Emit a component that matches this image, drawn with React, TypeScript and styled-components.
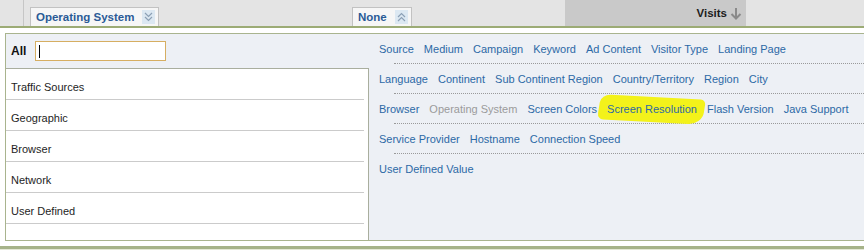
import React from 'react';
import styled, { createGlobalStyle } from 'styled-components';

const GlobalStyle = createGlobalStyle`
  html, body {
    margin: 0;
    padding: 0;
    background: #ffffff;
  }
  body {
    font-family: "Liberation Sans", Arial, sans-serif;
    font-size: 11px;
    overflow: hidden;
  }
`;

const Page = styled.div`
  width: 864px;
  height: 250px;
  display: flex;
  flex-direction: column;
  overflow: hidden;
`;

const Header = styled.div`
  display: flex;
  height: 26px;
  flex-shrink: 0;
  background: #e4e4e4;
  border-bottom: 2px solid #9cab75;
`;

const HeaderCell = styled.div<{ $width?: number; $shade?: boolean; $padLeft?: number; $end?: boolean; $divider?: boolean }>`
  display: flex;
  align-items: flex-end;
  justify-content: ${(p) => (p.$end ? 'flex-end' : 'flex-start')};
  box-sizing: border-box;
  width: ${(p) => (p.$width ? `${p.$width}px` : 'auto')};
  flex: ${(p) => (p.$width ? '0 0 auto' : '1')};
  padding-left: ${(p) => p.$padLeft ?? 0}px;
  background: ${(p) => (p.$shade ? '#c9c9c9' : 'transparent')};
  border-right: ${(p) => (p.$divider ? '1px solid #c6c6c6' : 'none')};
`;

const Tab = styled.div`
  display: flex;
  align-items: center;
  gap: 8px;
  height: 18px;
  padding: 0 3px 0 5px;
  background: #f6f6f6;
  border: 1px solid #c2c2c2;
  border-bottom: none;
  color: #2b5b96;
  font-weight: bold;
  font-size: 11.5px;
`;

const IconBox = styled.span`
  display: flex;
  align-items: center;
  justify-content: center;
  width: 13px;
  height: 14px;
  background: #dce8f2;
`;

const SortLabel = styled.div`
  display: flex;
  align-items: center;
  gap: 3px;
  height: 26px;
  padding-right: 4px;
  color: #1c1c1c;
  font-weight: bold;
  font-size: 11.5px;
`;

const Panel = styled.div`
  display: flex;
  height: 206px;
  margin: 5px 0 0 5px;
  border: 1px solid #a9b48e;
  border-right: none;
  background: #edf0f5;
  flex-shrink: 0;
`;

const LeftCol = styled.div`
  display: flex;
  flex-direction: column;
  width: 363px;
  flex-shrink: 0;
`;

const AllRow = styled.div`
  display: flex;
  align-items: center;
  gap: 9px;
  height: 34px;
  padding-left: 5px;
  font-weight: bold;
  font-size: 12px;
  color: #111;
`;

const SearchBox = styled.div`
  display: flex;
  align-items: center;
  box-sizing: border-box;
  width: 131px;
  height: 20px;
  background: #fff;
  border: 1px solid #d6ae62;
  padding-left: 3px;
`;

const Caret = styled.span`
  width: 1px;
  height: 13px;
  background: #000;
`;

const CategoryList = styled.div`
  flex: 1;
  background: #fff;
  border-top: 1px solid #a9ae9e;
  border-right: 1px solid #a9ae9e;
`;

const CategoryItem = styled.div`
  padding: 12px 0 5px 5px;
  margin-right: 4px;
  line-height: 13px;
  color: #1e1e1e;
  border-bottom: 1px solid #cbcbcb;
`;

const RightCol = styled.div`
  flex: 1;
  display: flex;
  flex-direction: column;
`;

const LinkLine = styled.div`
  display: flex;
  align-items: center;
  gap: 10px;
  height: 29px;
  padding-left: 10px;
  white-space: nowrap;
`;

const Divider = styled.div`
  margin-left: 25px;
  border-top: 1px dotted #9a9a9a;
`;

const DimLink = styled.span<{ $disabled?: boolean }>`
  color: ${(p) => (p.$disabled ? '#9b9b9b' : '#2c69a6')};
  cursor: ${(p) => (p.$disabled ? 'default' : 'pointer')};
`;

const Marked = styled.span`
  position: relative;
  z-index: 0;
  &::before {
    content: '';
    position: absolute;
    inset: -6px -7px -7px -8px;
    background: #f3f21a;
    border-radius: 10px 5px 14px 6px / 8px 5px 12px 6px;
    transform: rotate(3deg) skewX(-6deg);
    z-index: -1;
  }
`;

const Footer = styled.div`
  flex: 1;
  margin-top: 5px;
  border-top: 3px solid #a6b389;
  background: #e4e8d6;
`;

const ChevronDouble = ({ up }: { up?: boolean }) => (
  <svg width="9" height="10" viewBox="0 0 9 10">
    <g fill="none" stroke="#8ca0b6" strokeWidth="1.2">
      {up ? (
        <>
          <polyline points="1,5 4.5,1.5 8,5" />
          <polyline points="1,9 4.5,5.5 8,9" />
        </>
      ) : (
        <>
          <polyline points="1,1 4.5,4.5 8,1" />
          <polyline points="1,5 4.5,8.5 8,5" />
        </>
      )}
    </g>
  </svg>
);

const DownArrow = () => (
  <svg width="12" height="13" viewBox="0 0 12 13">
    <g fill="none" stroke="#8a8a8a" strokeWidth="2">
      <line x1="6" y1="1" x2="6" y2="11.5" />
      <polyline points="1.5,7 6,11.5 10.5,7" />
    </g>
  </svg>
);

const categories = ['Traffic Sources', 'Geographic', 'Browser', 'Network', 'User Defined'];

const linkRows: string[][] = [
  ['Source', 'Medium', 'Campaign', 'Keyword', 'Ad Content', 'Visitor Type', 'Landing Page'],
  ['Language', 'Continent', 'Sub Continent Region', 'Country/Territory', 'Region', 'City'],
  ['Browser', 'Operating System', 'Screen Colors', 'Screen Resolution', 'Flash Version', 'Java Support'],
  ['Service Provider', 'Hostname', 'Connection Speed'],
  ['User Defined Value'],
];

export default function App() {
  return (
    <Page>
      <GlobalStyle />
      <Header>
        <HeaderCell $width={24} $divider />
        <HeaderCell $width={328} $padLeft={6}>
          <Tab>
            Operating System
            <IconBox>
              <ChevronDouble />
            </IconBox>
          </Tab>
        </HeaderCell>
        <HeaderCell $width={213}>
          <Tab>
            None
            <IconBox>
              <ChevronDouble up />
            </IconBox>
          </Tab>
        </HeaderCell>
        <HeaderCell $width={181} $shade $end>
          <SortLabel>
            Visits
            <DownArrow />
          </SortLabel>
        </HeaderCell>
        <HeaderCell />
      </Header>

      <Panel>
        <LeftCol>
          <AllRow>
            All
            <SearchBox>
              <Caret />
            </SearchBox>
          </AllRow>
          <CategoryList>
            {categories.map((c) => (
              <CategoryItem key={c}>{c}</CategoryItem>
            ))}
          </CategoryList>
        </LeftCol>
        <RightCol>
          {linkRows.map((row, i) => (
            <div key={i}>
              <LinkLine>
                {row.map((label) => {
                  if (label === 'Screen Resolution') {
                    return (
                      <Marked key={label}>
                        <DimLink>{label}</DimLink>
                      </Marked>
                    );
                  }
                  return (
                    <DimLink key={label} $disabled={label === 'Operating System'}>
                      {label}
                    </DimLink>
                  );
                })}
              </LinkLine>
              {i < linkRows.length - 1 && <Divider />}
            </div>
          ))}
        </RightCol>
      </Panel>

      <Footer />
    </Page>
  );
}
